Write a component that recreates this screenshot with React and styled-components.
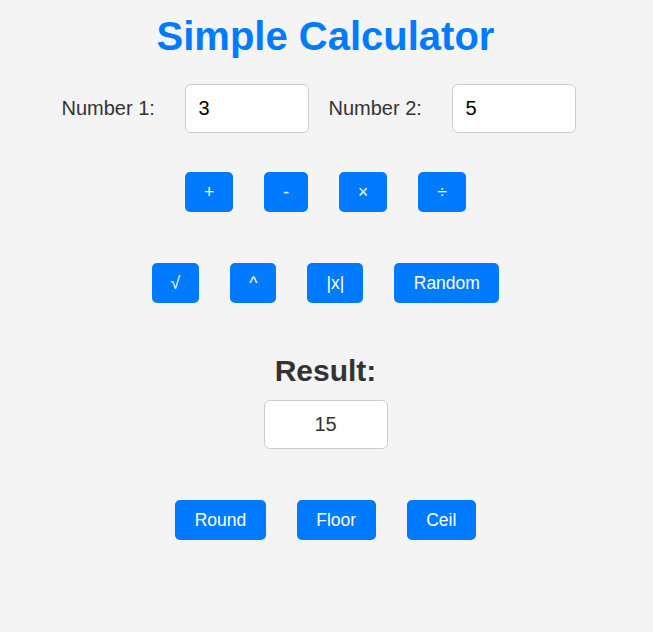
import React, { useState } from "react";
import styled, { createGlobalStyle } from "styled-components";

const GlobalStyle = createGlobalStyle`
  html, body {
    margin: 0;
    padding: 0;
    background: #f4f4f4;
    font-family: "Liberation Sans", Arial, sans-serif;
  }
`;

const Page = styled.div`
  display: flex;
  flex-direction: column;
  align-items: center;
  padding-top: 13px;
  padding-right: 2px;
  min-height: 619px;
  background: #f4f4f4;
`;

const Title = styled.h1`
  margin: 0;
  font-size: 40px;
  line-height: 46px;
  font-weight: bold;
  color: #007bff;
`;

const InputRow = styled.div`
  align-self: stretch;
  display: flex;
  justify-content: center;
  align-items: center;
  gap: 20px;
  padding-right: 14px;
  margin-top: 25px;
`;

const Label = styled.label`
  width: 103px;
  font-size: 20px;
  color: #333;
`;

const NumberInput = styled.input`
  box-sizing: border-box;
  width: 124px;
  height: 49px;
  padding: 0 13px;
  border: 1px solid #ccc;
  border-radius: 6px;
  background: #fff;
  font-family: "Liberation Sans", Arial, sans-serif;
  font-size: 20px;
  color: #000;
  outline: none;
`;

const ButtonRow = styled.div`
  display: flex;
  justify-content: center;
  gap: 31px;
  margin-top: ${(p) => p.$top}px;
`;

const Button = styled.button`
  box-sizing: border-box;
  height: 40px;
  padding: 0 ${(p) => (p.$op ? 19 : 19.5)}px;
  border: none;
  border-radius: 5px;
  background: #007bff;
  color: #fff;
  font-family: "Liberation Sans", Arial, sans-serif;
  font-size: 17.5px;
  cursor: pointer;
`;

const ResultHeading = styled.h2`
  margin: 51px 0 0;
  font-size: 30px;
  line-height: 34px;
  font-weight: bold;
  color: #333;
`;

const ResultBox = styled.div`
  box-sizing: border-box;
  width: 124px;
  height: 49px;
  margin-top: 12px;
  display: flex;
  align-items: center;
  justify-content: center;
  border: 1px solid #ccc;
  border-radius: 6px;
  background: #fff;
  font-size: 20px;
  color: #333;
`;

export default function App() {
  const [a, setA] = useState("3");
  const [b, setB] = useState("5");
  const [result, setResult] = useState(15);

  const x = parseFloat(a) || 0;
  const y = parseFloat(b) || 0;

  const ops = [
    { label: "+", fn: () => x + y },
    { label: "-", fn: () => x - y },
    { label: "×", fn: () => x * y },
    { label: "÷", fn: () => x / y },
  ];
  const ops2 = [
    { label: "√", fn: () => Math.sqrt(x), op: true },
    { label: "^", fn: () => Math.pow(x, y), op: true },
    { label: "|x|", fn: () => Math.abs(x), op: true },
    { label: "Random", fn: () => Math.random() },
  ];
  const ops3 = [
    { label: "Round", fn: () => Math.round(result) },
    { label: "Floor", fn: () => Math.floor(result) },
    { label: "Ceil", fn: () => Math.ceil(result) },
  ];

  return (
    <>
      <GlobalStyle />
      <Page>
        <Title>Simple Calculator</Title>
        <InputRow>
          <Label htmlFor="n1">Number 1:</Label>
          <NumberInput id="n1" value={a} onChange={(e) => setA(e.target.value)} />
          <Label htmlFor="n2">Number 2:</Label>
          <NumberInput id="n2" value={b} onChange={(e) => setB(e.target.value)} />
        </InputRow>
        <ButtonRow $top={39}>
          {ops.map((o) => (
            <Button key={o.label} $op onClick={() => setResult(o.fn())}>
              {o.label}
            </Button>
          ))}
        </ButtonRow>
        <ButtonRow $top={51}>
          {ops2.map((o) => (
            <Button key={o.label} $op={o.op} onClick={() => setResult(o.fn())}>
              {o.label}
            </Button>
          ))}
        </ButtonRow>
        <ResultHeading>Result:</ResultHeading>
        <ResultBox>{result}</ResultBox>
        <ButtonRow $top={51}>
          {ops3.map((o) => (
            <Button key={o.label} onClick={() => setResult(o.fn())}>
              {o.label}
            </Button>
          ))}
        </ButtonRow>
      </Page>
    </>
  );
}
